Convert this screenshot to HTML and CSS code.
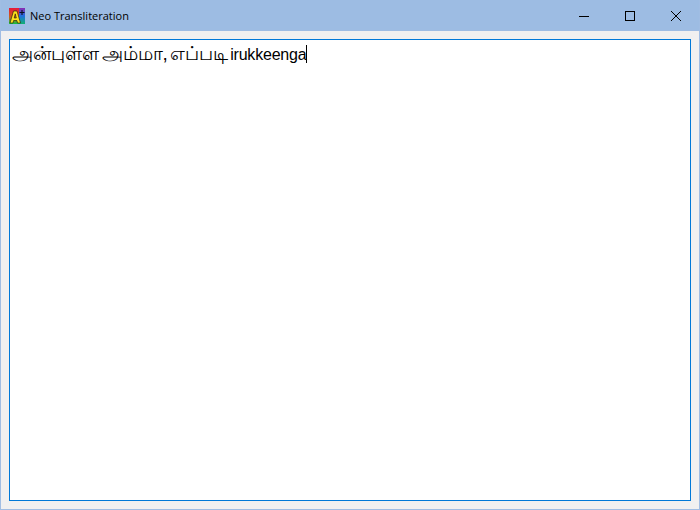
FILE: index.html
```html
<!DOCTYPE html>
<html lang="en">
<head>
    <meta charset="UTF-8">
    <title>Neo Transliteration</title>
    <link rel="stylesheet" href="styles.css">
</head>
<body>
    <div class="window">
        <div class="titlebar">
            <svg class="app-icon" width="16" height="16" viewBox="0 0 16 16">
                <defs>
                    <linearGradient id="icon-bg" x1="0" y1="0" x2="0" y2="1">
                        <stop offset="0" stop-color="#e8173a"/>
                        <stop offset="0.55" stop-color="#c8601a"/>
                        <stop offset="1" stop-color="#14c040"/>
                    </linearGradient>
                    <linearGradient id="icon-side" x1="0" y1="0" x2="0" y2="1">
                        <stop offset="0" stop-color="#8a2ab0"/>
                        <stop offset="0.5" stop-color="#2070e0"/>
                        <stop offset="1" stop-color="#10b070"/>
                    </linearGradient>
                </defs>
                <rect width="16" height="16" fill="url(#icon-bg)"/>
                <rect x="10" width="6" height="16" fill="url(#icon-side)"/>
                <path d="M1 15L4.500 3h3.500l3.500 12H8.500l-.6-2.500H4.600L4 15zM5.200 10h2.100L6.250 5.800z" fill="#ffe21a" stroke="#111" stroke-width="0.600"/>
                <path d="M10.500 4.500h5M13 2v5" stroke="#0c1020" stroke-width="1.100"/>
            </svg>
            <span class="title">Neo Transliteration</span>
            <div class="controls">
                <div class="control">
                    <svg width="10" height="10" viewBox="0 0 10 10"><path d="M0 5.500h10" stroke="#000" fill="none"/></svg>
                </div>
                <div class="control">
                    <svg width="10" height="10" viewBox="0 0 10 10"><rect x="0.500" y="0.500" width="9" height="9" stroke="#000" fill="none"/></svg>
                </div>
                <div class="control">
                    <svg width="10" height="10" viewBox="0 0 10 10"><path d="M0 0L10 10M10 0L0 10" stroke="#000" fill="none"/></svg>
                </div>
            </div>
        </div>
        <div class="content">
            <div class="editor"><span class="tamil">அன்புள்ள அம்மா, எப்படி</span> <span class="typed">irukkeenga</span><span class="caret"></span></div>
        </div>
    </div>
</body>
</html>
```

FILE: styles.css
```css
html, body {
    margin: 0;
    height: 100%;
    overflow: hidden;
}

body {
    font-family: 'Liberation Sans', 'Noto Sans', sans-serif;
}

.window {
    box-sizing: border-box;
    width: 700px;
    height: 510px;
    display: flex;
    flex-direction: column;
    background-color: #f0f0f0;
    border: 1px solid #a0bde3;
    border-top: none;
}

.titlebar {
    height: 31px;
    display: flex;
    align-items: center;
    background-color: #9dbce3;
    padding-left: 8px;
    flex-shrink: 0;
}

.app-icon {
    flex-shrink: 0;
}

.title {
    margin-left: 5px;
    font-family: 'Open Sans', 'Noto Sans', sans-serif;
    font-size: 11px;
    color: #000;
}

.controls {
    display: flex;
    margin-left: auto;
}

.control {
    width: 46px;
    height: 31px;
    display: flex;
    align-items: center;
    justify-content: center;
}

.content {
    flex: 1;
    display: flex;
    padding: 8px;
}

.editor {
    flex: 1;
    background-color: #fff;
    border: 1px solid #0078d7;
    padding: 3px 2px;
    font-size: 16px;
    line-height: 22px;
    color: #000;
    white-space: pre;
    word-spacing: -2.700px;
}

.tamil {
    font-size: 19px;
    line-height: 22px;
}

.typed {
    letter-spacing: -0.200px;
}

.caret {
    display: inline-block;
    width: 1px;
    height: 18px;
    background-color: #000;
    vertical-align: -3px;
}
```
